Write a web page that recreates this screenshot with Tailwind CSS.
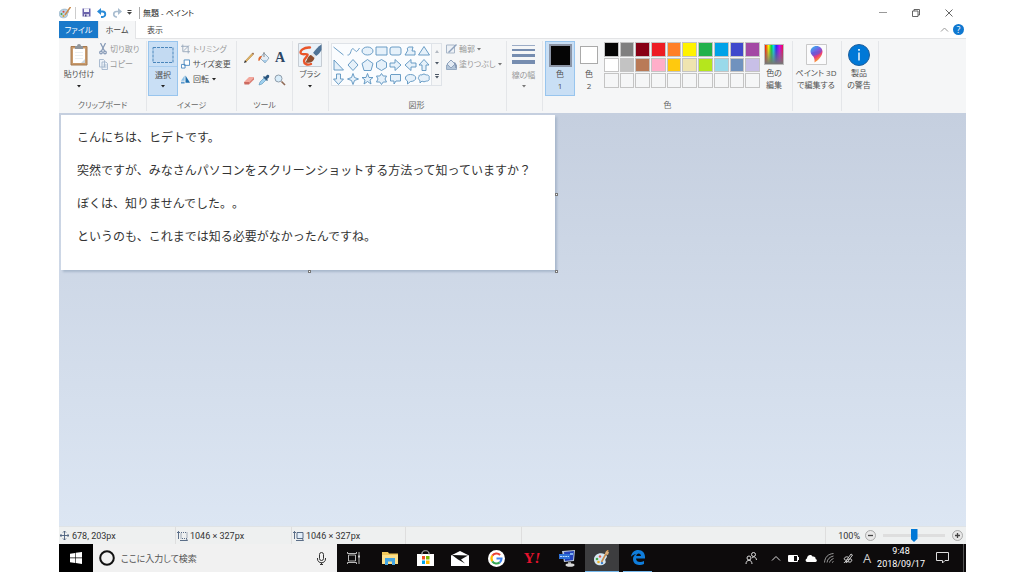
<!DOCTYPE html>
<html lang="ja">
<head>
<meta charset="utf-8">
<meta name="viewport" content="width=device-width, initial-scale=1">
<title>無題 - ペイント</title>
<script src="https://cdn.jsdelivr.net/npm/@tailwindcss/browser@4"></script>
</head>
<body class="bg-white">
<div class="flex h-screen flex-col overflow-hidden pr-[58px] pb-1 pl-[59px] font-['Open_Sans','Noto_Sans_CJK_JP',sans-serif] text-[9px] leading-3 text-[#444] [font-feature-settings:'palt']">

  <!-- Title bar -->
  <header class="flex h-[21px] shrink-0 items-center pt-1">
    <svg class="h-3 w-3" viewBox="0 0 12 12"><path d="M0 7C0 3.500 4 1 8 2.500 10 4 10 5 9 6c-1 1 0 2-1 3.500C5.500 12 0 11 0 7z" fill="#b9d3e6" stroke="#7f9cb3" stroke-width=".5"/><circle cx="2.500" cy="7" r="1" fill="#4aa54a"/><circle cx="4.500" cy="9" r="1" fill="#e0a020"/><circle cx="4.500" cy="4.800" r="1" fill="#d9493c"/><path d="M11.500 0 6 8" stroke="#c98a4a" stroke-width="1.500"/></svg>
    <span class="ml-1 h-3 w-px bg-[#ccc]"></span>
    <button class="ml-[6px] block" aria-label="保存"><svg class="h-[9px] w-[9px]" viewBox="0 0 9 9"><path d="M.5.5h8v8h-8z" fill="#6a62ab"/><path d="M2 .5h5V4H2z" fill="#f4f4fb"/><path d="M2 6h5v2.500H2z" fill="#d4d2e8"/><path d="M3 6.500h1.500v2H3z" fill="#4a4484"/></svg></button>
    <button class="ml-[6px] block" aria-label="元に戻す"><svg class="h-[10px] w-[10px]" viewBox="0 0 10 10" fill="none"><path d="M2 3.500h3.500a2.500 2.500 0 0 1 0 5.500H4" stroke="#2a8bd8" stroke-width="1.900"/><path d="M4 0v7L0 3.500z" fill="#2a8bd8"/></svg></button>
    <button class="ml-[5px] block" aria-label="やり直し"><svg class="h-[10px] w-[10px]" viewBox="0 0 10 10" fill="none"><path d="M7 3.500H4.500A2.500 2.500 0 0 0 4.500 9H5" stroke="#a9bdd0" stroke-width="1.700"/><path d="M6 0v7l4-3.500z" fill="#a9bdd0"/></svg></button>
    <button class="ml-[5px] block" aria-label="クイック アクセスのカスタマイズ"><svg class="h-[5px] w-[5px]" viewBox="0 0 5 5"><path d="M.5 0h4v1h-4zM0 2h5L2.500 4.800z" fill="#444"/></svg></button>
    <span class="ml-[7px] h-3 w-px bg-[#aaa]"></span>
    <h1 class="ml-[3px] text-[8px] text-[#222]">無題 - ペイント</h1>
    <div class="ml-auto flex items-center gap-[25px] pr-[13px]">
      <button aria-label="最小化"><svg class="h-2 w-2" viewBox="0 0 8 8"><path d="M0 3.500h8" stroke="#999"/></svg></button>
      <button aria-label="元に戻す (縮小)"><svg class="h-2 w-2" viewBox="0 0 8 8" fill="none" stroke="#555" stroke-width=".9"><path d="M.5 2h5.500v5.500H.5zM2 2V.5h5.500V6H6"/></svg></button>
      <button aria-label="閉じる"><svg class="h-2 w-2" viewBox="0 0 8 8" stroke="#555" stroke-width=".9"><path d="m.5.5 7 7m0-7-7 7"/></svg></button>
    </div>
  </header>

  <!-- Tabs -->
  <nav class="flex h-[17px] shrink-0 items-stretch">
    <button class="w-[39px] bg-[#1979ca] text-[8px] text-white">ファイル</button>
    <button class="z-10 -mb-px w-[38px] border-x border-[#e3e4e6] bg-[#f5f6f7] text-[8px] text-[#444]">ホーム</button>
    <button class="w-[38px] text-[8px] text-[#444]">表示</button>
    <div class="ml-auto flex items-center gap-1 pr-[2px]">
      <button class="block" aria-label="リボンの最小化"><svg class="h-2 w-[9px]" viewBox="0 0 9 8" fill="none"><path d="m1 5.500 3.500-3.500L8 5.500" stroke="#999"/></svg></button>
      <button class="size-[11px] rounded-full bg-[#0f78d0] text-[9px] leading-[11px] text-white" aria-label="ヘルプ">?</button>
    </div>
  </nav>

  <!-- Ribbon -->
  <div class="flex h-[75px] shrink-0 border-t border-[#e3e4e6] bg-[#f5f6f7] py-[2px] text-[8px] text-[#505050]">
    <section class="flex w-[88px] shrink-0 flex-col border-r border-[#e4e6e9]">
      <div class="flex grow">
        <button class="ml-[3px] flex w-[34px] flex-col items-center pt-[3px]">
          <svg class="h-[22px] w-[18px]" viewBox="0 0 18 22"><path d="M1 2.500h16v18.500H1z" fill="#c99a6b" stroke="#a67a50"/><path d="M3 4.500h12v14.500H3z" fill="#fff"/><path d="M11 19h4v-4z" fill="#c9d5df"/><path d="M5 2h2a2 2 0 0 1 4 0h2v3H5z" fill="#8e959c"/><path d="M5 8.500h8M5 11.500h8M5 14.500h8" stroke="#e0e6ec" stroke-width=".7"/></svg>
          <span class="mt-[2px] whitespace-nowrap">貼り付け</span>
          <svg class="mt-[5px] h-[3px] w-[4px]" viewBox="0 0 4 3"><path d="M0 0h4L2 2.600z" fill="#222"/></svg>
        </button>
        <div class="ml-[3px] flex flex-col gap-[3px] pt-[2px] text-[#999]">
          <button class="flex items-center gap-[3px] whitespace-nowrap"><svg class="h-3 w-2" viewBox="0 0 8 12" fill="none" stroke="#8498b5" stroke-width="1.200"><path d="M1.500 0 5.500 8M6.500 0l-4 8"/><circle cx="2" cy="9.500" r="1.300"/><circle cx="6" cy="9.500" r="1.300"/></svg>切り取り</button>
          <button class="flex items-center gap-[2px] whitespace-nowrap"><svg class="h-[11px] w-[9px]" viewBox="0 0 9 11" fill="#edf2f8" stroke="#a3b6cc" stroke-width=".9"><path d="M.5.5h4l1 1V8h-5zM3 3h4l1.500 1.500v6H3z"/><path d="M4.500 6h3M4.500 8h3"/></svg>コピー</button>
        </div>
      </div>
      <h2 class="text-center text-[#666]">クリップボード</h2>
    </section>

    <section class="flex w-[90px] shrink-0 flex-col border-r border-[#e4e6e9]">
      <div class="flex grow">
        <button class="ml-px flex h-[55px] w-[30px] flex-col items-center border border-[#98c5ee] bg-[#c9dff5]">
          <svg class="mt-1 h-[18px] w-[22px]" viewBox="0 0 22 18"><path d="M1 1.500h20v15H1z" fill="#c3daf2" stroke="#4b86bb" stroke-dasharray="3 1"/></svg>
          <span class="mt-[2px] w-full border-t border-[#a9cdef] pt-[2px]">選択</span>
          <svg class="mt-1 h-[3px] w-[4px]" viewBox="0 0 4 3"><path d="M0 0h4L2 2.600z" fill="#222"/></svg>
        </button>
        <div class="ml-[3px] flex flex-col gap-[3px] pt-[2px]">
          <button class="flex items-center gap-[3px] whitespace-nowrap text-[#999]"><svg class="h-[10px] w-[9px]" viewBox="0 0 10 10" fill="none" stroke="#98a8bb"><path d="M2 0v8h8M0 2h8v8M3 7l6-6"/></svg>トリミング</button>
          <button class="flex items-center gap-[3px] whitespace-nowrap"><svg class="h-[10px] w-[9px]" viewBox="0 0 10 10" fill="#fff" stroke="#4787c0"><path d="M3.500.5h6v6h-6zM.5 5.500h4v4h-4z"/></svg>サイズ変更</button>
          <button class="flex items-center gap-[3px] whitespace-nowrap"><svg class="h-[9px] w-[9px]" viewBox="0 0 10 9"><path d="M4 0v6H0z" fill="#8fc3e8"/><path d="m5 0 5 8H5z" fill="#1e6fae"/><path d="M0 7h4v2H0z" fill="#5b9bd0"/></svg>回転<svg class="h-[3px] w-[4px]" viewBox="0 0 4 3"><path d="M0 0h4L2 2.600z" fill="#222"/></svg></button>
        </div>
      </div>
      <h2 class="text-center text-[#666]">イメージ</h2>
    </section>

    <section class="flex w-[56px] shrink-0 flex-col border-r border-[#e4e6e9]">
      <div class="grid grow grid-cols-3 place-items-center px-1 pt-[6px] pb-[8px]">
        <button aria-label="鉛筆"><svg class="size-3" viewBox="0 0 12 12"><path d="m1 11 1-3 2 2z" fill="#333"/><path d="M2.500 8.500 9 1.500l1.200 1.200-6.700 6.800z" fill="#e3b562" stroke="#a57b3b" stroke-width=".5"/><path d="m9 1.500 1.200 1.200.8-.9L10 .6z" fill="#8c5a3a"/></svg></button>
        <button aria-label="塗りつぶし"><svg class="size-3" viewBox="0 0 12 12"><path d="m6 1 5 5-4 5-5-5z" fill="#e4edf5" stroke="#7f98ad" stroke-width=".8"/><path d="M6 5V0" stroke="#888"/><path d="M4 4C1 4 0 6 .5 9 2 9 2 7 3 6z" fill="#e0672f"/><path d="M4.500 8h4.800L7 11z" fill="#a5cbe8"/></svg></button>
        <button class="font-['Liberation_Serif',serif] text-[14px] leading-3 font-bold text-[#2c4664]" aria-label="テキスト">A</button>
        <button aria-label="消しゴム"><svg class="size-3" viewBox="0 0 12 12"><path d="m1 8 5-5h5L6 8z" fill="#f3a79c"/><path d="M1 8h5v2.500H1.500z" fill="#cc6a60"/><path d="m6 8 5-5v2.500L6 10.500z" fill="#dd8278"/></svg></button>
        <button aria-label="色の選択"><svg class="size-3" viewBox="0 0 12 12"><path d="m1 11 1-3 4-4 2 2-4 4z" fill="#9fd0ef" stroke="#5690b5" stroke-width=".6"/><path d="m5 3 4 4 1-1-1-1c3-1 3-5 0-4L7 3 6 2z" fill="#2b567f"/></svg></button>
        <button aria-label="拡大鏡"><svg class="size-3" viewBox="0 0 12 12"><circle cx="4.500" cy="4.500" r="3.500" fill="#d9edfa" stroke="#8f9dab"/><path d="m7.500 7.500 3.500 3.500" stroke="#8f6a55" stroke-width="1.600"/></svg></button>
      </div>
      <h2 class="text-center text-[#666]">ツール</h2>
    </section>

    <section class="flex w-[36px] shrink-0 flex-col border-r border-[#e4e6e9]">
      <button class="flex flex-col items-center pr-px pt-[2px]">
        <svg class="h-6 w-6" viewBox="0 0 24 24"><path d="M.5.5h23v23H.5z" fill="#eaf2f9" stroke="#c6ccd3"/><path d="M12 4.500C6 4 1 8 3 10.500c1.500 1.500 5.500 0 6.500 1 1 1.500-3.500 3.500-3.500 6.500s3 4.500 7 3" fill="none" stroke="#e9552a" stroke-width="2.400" stroke-linecap="round"/><path d="M23.500 1.500c-3.500 2-6.500 5.500-8.500 8.500l3 3c2.500-1.500 4.500-4 5.500-6z" fill="#4f7396"/><path d="m15 10 3 3-1.500 2-3.500-3z" fill="#e2e5e8"/><path d="M13 12c-3 .5-3.500 4-5.500 7.500 5 1 8-.5 9-4.500z" fill="#8e4d2d"/></svg>
        <span class="mt-px">ブラシ</span>
        <svg class="mt-[5px] h-[3px] w-[4px]" viewBox="0 0 4 3"><path d="M0 0h4L2 2.600z" fill="#222"/></svg>
      </button>
    </section>

    <section class="flex w-[178px] shrink-0 flex-col border-r border-[#e4e6e9]">
      <div class="flex grow items-start">
        <div class="mt-[2px] ml-[2px] flex h-[43px] border border-[#dfe3e8] bg-[#fafcfe]">
          <svg class="h-[42px] w-[99px]" viewBox="0 0 99 42" fill="#e6f1fa" stroke="#5b93c0" stroke-width=".9" role="img" aria-label="図形の一覧">
            <path d="m1.500 3 10 8" fill="none"/>
            <path d="M15.500 11c4 1 3-8 6-6s2 5 6-1" fill="none"/>
            <ellipse cx="35.500" cy="7" rx="5.500" ry="4"/>
            <path d="M44 3h11v8H44z"/>
            <rect x="58" y="3" width="11" height="8" rx="2"/>
            <path d="m73 11 3-5-1-1 1.500-2H81l-1 4h3v4z"/>
            <path d="m92 2.500 5.500 8.500h-11z"/>
            <path d="M2 16v10h9.500z"/>
            <path d="m21 15.500 5 5.500-5 5.500-5-5.500z"/>
            <path d="m35.500 15.500 5.500 4-2 7h-7l-2-7z"/>
            <path d="m49.500 15.500 5 3v5l-5 3-5-3v-5z"/>
            <path d="M58 19h5v-3.500l6 5.500-6 5.500V23h-5z"/>
            <path d="M84 19h-5v-3.500L73 21l6 5.500V23h5z"/>
            <path d="M90 26.500V21h-3l5-5.500 5 5.500h-3v5.500z"/>
            <path d="M4.500 30v5h-3l5 5.500 5-5.500h-3v-5z"/>
            <path d="m21 29.500 1.500 4 4 1.500-4 1.500-1.500 4-1.500-4-4-1.500 4-1.500z"/>
            <path d="m35.500 29.500 1.500 4h4l-3 2.500 1 4-3.500-2.500L32 40l1-4-3-2.500h4z"/>
            <path d="m49.500 29.500 1.700 2.500h3.300L53 35l1.500 3h-3.300l-1.700 2.500-1.700-2.500h-3.300l1.500-3-1.500-3h3.300z"/>
            <path d="M59 30.500h9.500v6.500H64l-2 3v-3h-3.500v-6z"/>
            <path d="M78.500 30.500c7 0 7 7 0 7l-3 2.500v-3c-4-2-2-6.500 3-6.500z"/>
            <path d="M90 31c1-1.500 3-1 4 0 2-.5 4 1 3 3 1 2-1 3.500-3 3-1 1-3 1-4 0l-2 2v-2.500c-2-1-2-3-1-4 0-1.500 1-2 3-1.500z"/>
          </svg>
          <div class="flex w-[10px] flex-col items-center justify-between border-l border-[#dfe3e8] bg-[#f5f6f7] py-[6px]">
            <svg class="h-[3px] w-[4px]" viewBox="0 0 4 3"><path d="M0 3h4L2 0z" fill="#b3bac2"/></svg>
            <svg class="h-[3px] w-[4px]" viewBox="0 0 4 3"><path d="M0 0h4L2 2.600z" fill="#4c5866"/></svg>
            <svg class="h-[5px] w-[4px]" viewBox="0 0 4 5"><path d="M0 0h4v1H0zM0 2h4L2 4.600z" fill="#4c5866"/></svg>
          </div>
        </div>
        <div class="ml-1 flex flex-col gap-[3px] pt-[2px] text-[#999]">
          <button class="flex items-center gap-[2px] whitespace-nowrap"><svg class="h-[10px] w-[11px]" viewBox="0 0 11 10"><path d="M.5 1h8v8h-8z" fill="#edf1f6" stroke="#a9b7c8"/><path d="m2 8 8-8 1 1-8 8z" fill="#8fa2bc"/></svg>輪郭<svg class="h-[3px] w-[4px]" viewBox="0 0 4 3"><path d="M0 0h4L2 2.600z" fill="#777"/></svg></button>
          <button class="flex items-center gap-[2px] whitespace-nowrap"><svg class="h-[11px] w-[11px]" viewBox="0 0 11 11"><path d="M.5 6h10v4.500H.5z" fill="#b2c4d8" stroke="#97abc2"/><path d="m5 1 4 4-4 4-4-4z" fill="#e2eaf3" stroke="#8fa2bc"/><path d="M8 4c2 0 2 3 2 5" fill="none" stroke="#8295b2" stroke-width="1.500"/></svg>塗りつぶし<svg class="h-[3px] w-[4px]" viewBox="0 0 4 3"><path d="M0 0h4L2 2.600z" fill="#777"/></svg></button>
        </div>
      </div>
      <h2 class="pr-[2px] text-center text-[#666]">図形</h2>
    </section>

    <section class="flex w-[36px] shrink-0 flex-col border-r border-[#e4e6e9]">
      <button class="flex flex-col items-center pt-1 pr-[2px] text-[#999]">
        <svg class="h-5 w-[23px]" viewBox="0 0 23 20" fill="#768db0"><path d="M0 0h23v1H0z" opacity=".7"/><path d="M0 4h23v2H0zM0 9h23v3H0zM0 15h23v4H0z"/></svg>
        <span class="mt-1">線の幅</span>
        <svg class="mt-1 h-[3px] w-[4px]" viewBox="0 0 4 3"><path d="M0 0h4L2 2.600z" fill="#777"/></svg>
      </button>
    </section>

    <section class="flex w-[250px] shrink-0 flex-col border-r border-[#e4e6e9]">
      <div class="flex grow items-start">
        <button class="ml-[2px] flex h-[55px] w-[30px] flex-col items-center border border-[#98c5ee] bg-[#c9dff5] pt-[2px]">
          <span class="size-[23px] border-2 border-[#8b94a5] bg-[#050505]"></span>
          <span class="mt-px">色</span><span>1</span>
        </button>
        <button class="flex h-[55px] w-[28px] flex-col items-center pt-[5px]">
          <span class="size-[18px] border border-[#aaa] bg-white"></span>
          <span class="mt-1">色</span><span>2</span>
        </button>
        <div class="mt-px ml-px grid h-[46px] w-[156px] grid-cols-10 grid-rows-3 gap-px">
          <button aria-label="黒" class="border border-[#c4c4c4] bg-[#050505]"></button>
          <button aria-label="灰色" class="border border-[#c4c4c4] bg-[#7f7f7f]"></button>
          <button aria-label="濃い赤" class="border border-[#c4c4c4] bg-[#880015]"></button>
          <button aria-label="赤" class="border border-[#c4c4c4] bg-[#ed1c24]"></button>
          <button aria-label="オレンジ" class="border border-[#c4c4c4] bg-[#ff7f27]"></button>
          <button aria-label="黄" class="border border-[#c4c4c4] bg-[#fff200]"></button>
          <button aria-label="緑" class="border border-[#c4c4c4] bg-[#22b14c]"></button>
          <button aria-label="青緑" class="border border-[#c4c4c4] bg-[#00a2e8]"></button>
          <button aria-label="藍" class="border border-[#c4c4c4] bg-[#3f48cc]"></button>
          <button aria-label="紫" class="border border-[#c4c4c4] bg-[#a349a4]"></button>
          <button aria-label="白" class="border border-[#c4c4c4] bg-white"></button>
          <button aria-label="薄い灰色" class="border border-[#c4c4c4] bg-[#c3c3c3]"></button>
          <button aria-label="茶" class="border border-[#c4c4c4] bg-[#b97a57]"></button>
          <button aria-label="ローズ" class="border border-[#c4c4c4] bg-[#ffaec9]"></button>
          <button aria-label="ゴールド" class="border border-[#c4c4c4] bg-[#ffc90e]"></button>
          <button aria-label="薄い黄" class="border border-[#c4c4c4] bg-[#efe4b0]"></button>
          <button aria-label="ライム" class="border border-[#c4c4c4] bg-[#b5e61d]"></button>
          <button aria-label="薄い青緑" class="border border-[#c4c4c4] bg-[#99d9ea]"></button>
          <button aria-label="青灰色" class="border border-[#c4c4c4] bg-[#7092be]"></button>
          <button aria-label="ラベンダー" class="border border-[#c4c4c4] bg-[#c8bfe7]"></button>
          <button aria-label="ユーザー色 1" class="border border-[#c4c4c4]"></button>
          <button aria-label="ユーザー色 2" class="border border-[#c4c4c4]"></button>
          <button aria-label="ユーザー色 3" class="border border-[#c4c4c4]"></button>
          <button aria-label="ユーザー色 4" class="border border-[#c4c4c4]"></button>
          <button aria-label="ユーザー色 5" class="border border-[#c4c4c4]"></button>
          <button aria-label="ユーザー色 6" class="border border-[#c4c4c4]"></button>
          <button aria-label="ユーザー色 7" class="border border-[#c4c4c4]"></button>
          <button aria-label="ユーザー色 8" class="border border-[#c4c4c4]"></button>
          <button aria-label="ユーザー色 9" class="border border-[#c4c4c4]"></button>
          <button aria-label="ユーザー色 10" class="border border-[#c4c4c4]"></button>
        </div>
        <button class="flex w-[28px] flex-col items-center pt-[3px]">
          <span class="h-[21px] w-[20px] border border-[#bbb] bg-[linear-gradient(to_bottom,transparent,#777),linear-gradient(to_right,#f00,#ff0_20%,#0d3_35%,#0df_48%,#22f_62%,#c0f_80%,#f04)]"></span>
          <span class="mt-[2px]">色の<br>編集</span>
        </button>
      </div>
      <h2 class="text-center text-[#666]">色</h2>
    </section>

    <section class="flex w-[49px] shrink-0 flex-col border-r border-[#e4e6e9]">
      <button class="flex flex-col items-center pt-[3px] pr-[2px]">
        <svg class="h-[21px] w-[21px]" viewBox="0 0 21 21"><defs><linearGradient id="pin" x1="0" y1="0" x2=".5" y2="1"><stop offset="0" stop-color="#24c4f4"/><stop offset=".45" stop-color="#7a5be0"/><stop offset=".7" stop-color="#e93a7c"/><stop offset="1" stop-color="#ffb020"/></linearGradient></defs><path d="M.5.5h20v20H.5z" fill="#fbfbfc" stroke="#c9c9c9"/><path d="M10.500 2C7 2 4.500 4.500 4.500 7.500c0 4 5 4 4 11 4-2 8-7 8-11C16.500 4.500 14 2 10.500 2z" fill="url(#pin)"/><path d="M5 9c3-2 8-1 11-3-1 4-5 5-9 6z" fill="#5f57d6" opacity=".6"/></svg>
        <span class="mt-[2px] whitespace-nowrap">ペイント 3D<br>で編集する</span>
      </button>
    </section>

    <section class="flex w-[37px] shrink-0 flex-col border-r border-[#e4e6e9]">
      <button class="flex flex-col items-center pr-[2px] pt-[3px]">
        <svg class="h-[22px] w-[22px]" viewBox="0 0 22 22"><circle cx="11" cy="11" r="10.500" fill="#0078d7" stroke="#1f5f9c"/><path d="M10.300 8.500h1.400v8h-1.400zM10.200 5h1.600v1.800h-1.600z" fill="#fff"/></svg>
        <span class="mt-px whitespace-nowrap">製品<br>の警告</span>
      </button>
    </section>
  </div>

  <!-- Canvas area -->
  <main class="min-h-0 grow bg-linear-to-b from-[#c5cfdf] to-[#dce6f3] pt-[2px] pl-[2px]">
    <div class="relative w-fit bg-white pt-[5px] pr-6 pb-[18px] pl-4 font-['Noto_Sans_CJK_JP',sans-serif] text-[12px] leading-[33px] whitespace-nowrap text-[#333] shadow-[2px_2px_2px_#a9b8cc] [font-feature-settings:normal] [text-spacing-trim:space-all]">
      <p>こんにちは、ヒデトです。</p>
      <p>突然ですが、みなさんパソコンをスクリーンショットする方法って知っていますか？</p>
      <p>ぼくは、知りませんでした。。</p>
      <p>というのも、これまでは知る必要がなかったんですね。</p>
      <span class="absolute top-1/2 -right-[3px] size-[3px] border border-[#777] bg-white"></span>
      <span class="absolute -bottom-[3px] left-1/2 size-[3px] border border-[#777] bg-white"></span>
      <span class="absolute -right-[3px] -bottom-[3px] size-[3px] border border-[#777] bg-white"></span>
    </div>
  </main>

  <!-- Status bar -->
  <footer class="flex h-[18px] shrink-0 items-stretch border-t border-[#dfe3e6] bg-[#eef0f0] font-['Roboto','Noto_Sans_CJK_JP',sans-serif] text-[9px] text-[#333]">
    <div class="flex w-[117px] items-center gap-[3px] border-r border-[#dedede] pl-px"><svg class="size-[9px]" viewBox="0 0 9 9" fill="none" stroke="#4a5f7c" stroke-width=".9"><path d="M4.500 0v9M0 4.500h9M3 1.500 4.500 0 6 1.500M3 7.500 4.500 9 6 7.500M1.500 3 0 4.500 1.500 6M7.500 3 9 4.500 7.500 6"/></svg>678, 203px</div>
    <div class="flex w-[116px] items-center gap-[2px] border-r border-[#dedede] pl-px"><svg class="h-[10px] w-[11px]" viewBox="0 0 11 10" fill="none" stroke="#4a5f7c" stroke-width=".9"><path d="M1.500 8V.5M0 2 1.500.5 3 2M3 9.500h7.500M9.500 8l1 1.500"/><path d="M4 1.500h6v6H4z" stroke-dasharray="1 1"/></svg>1046 × 327px</div>
    <div class="flex w-[114px] items-center gap-[2px] border-r border-[#dedede] pl-px"><svg class="h-[10px] w-[11px]" viewBox="0 0 11 10" fill="none" stroke="#4a5f7c" stroke-width=".9"><path d="M1.500 8V.5M0 2 1.500.5 3 2M3 9.500h7.500M9.500 8l1 1.500"/><path d="M4 1.500h6v6H4z" fill="#e3effa"/></svg>1046 × 327px</div>
    <div class="w-[116px] border-r border-[#dedede]"></div>
    <div class="ml-auto flex items-center border-l border-[#dedede] pr-[3px] pl-3">
      <label for="zoom">100%</label>
      <button class="ml-[5px] block" aria-label="縮小"><svg class="size-[11px]" viewBox="0 0 11 11"><circle cx="5.500" cy="5.500" r="5" fill="#e8e8e8" stroke="#999" stroke-width=".8"/><path d="M3 5.500h5" stroke="#444" stroke-width="1.300"/></svg></button>
      <input id="zoom" type="range" value="50" class="mx-[7px] h-[13px] w-[62px] appearance-none bg-[linear-gradient(#dedede,#dedede)] bg-[length:100%_3px] bg-center bg-no-repeat [&::-webkit-slider-thumb]:h-[13px] [&::-webkit-slider-thumb]:w-[7px] [&::-webkit-slider-thumb]:appearance-none [&::-webkit-slider-thumb]:bg-[#0078d7] [&::-webkit-slider-thumb]:[clip-path:polygon(0_0,100%_0,100%_75%,50%_100%,0_75%)]">
      <button class="block" aria-label="拡大"><svg class="size-[11px]" viewBox="0 0 11 11"><circle cx="5.500" cy="5.500" r="5" fill="#e8e8e8" stroke="#999" stroke-width=".8"/><path d="M3 5.500h5M5.500 3v5" stroke="#444" stroke-width="1.300"/></svg></button>
    </div>
  </footer>

  <!-- Taskbar -->
  <div class="flex h-7 shrink-0 items-stretch bg-[#0d0b0c] text-white">
    <button class="flex w-[34px] items-center justify-center bg-black" aria-label="スタート"><svg class="size-3" viewBox="0 0 12 12" fill="#fff"><path d="m0 1.700 5.200-.8v4.700H0zM5.800.8 12 0v5.600H5.800zM0 6.300h5.200V11L0 10.300zM5.800 6.300H12V12l-6.200-.9z"/></svg></button>
    <div class="flex w-[244px] items-center bg-[#f1f1f1] pr-[11px] pl-[6px]">
      <svg class="size-4" viewBox="0 0 16 16"><circle cx="8" cy="8" r="6.800" fill="none" stroke="#111" stroke-width="2"/></svg>
      <input type="text" placeholder="ここに入力して検索" aria-label="検索" class="ml-[6px] h-5 w-0 grow bg-transparent text-[9px] outline-none placeholder:text-[#555]">
      <svg class="h-[13px] w-[9px]" viewBox="0 0 9 13" fill="none" stroke="#333"><rect x="2.500" y=".5" width="4" height="8" rx="2"/><path d="M.5 6v1c0 5 8 5 8 0V6M4.500 10.500v2M3 12.500h3"/></svg>
    </div>
    <div class="flex">
      <button class="flex w-[33px] items-center justify-center" aria-label="タスク ビュー"><svg class="h-3 w-[13px]" viewBox="0 0 13 12" fill="none" stroke="#ccc" stroke-width=".9"><path d="M1.500 3h7v6h-7zM.5 0v1.500h9V0M.5 12v-1.500h9V12M12 0v12"/><path d="M11 3.500h2v2h-2z" fill="#ccc" stroke="none"/></svg></button>
      <button class="ml-[3px] flex w-[34px] items-center justify-center" aria-label="エクスプローラー"><svg class="h-[13px] w-4" viewBox="0 0 16 13"><path d="M0 0h6l1 1.500h9V12H0z" fill="#f0c75a"/><path d="M0 3h16v9H0z" fill="#fbe08c"/><path d="M3 6h10v7h-3V9.500H6V13H3z" fill="#45a6e4"/></svg></button>
      <button class="ml-px flex w-[34px] items-center justify-center" aria-label="ストア"><svg class="h-4 w-[17px]" viewBox="0 0 17 16"><path d="M0 4h17v12H0z" fill="#fff"/><path d="M5 5V3c0-3 7-3 7 0v2" fill="none" stroke="#ccc"/><path d="M5 6h3v3.500H5z" fill="#f25022"/><path d="M9 6h3.500v3.500H9z" fill="#7fba00"/><path d="M5 10.500h3V14H5z" fill="#00a4ef"/><path d="M9 10.500h3.500V14H9z" fill="#ffb900"/></svg></button>
      <button class="ml-px flex w-[34px] items-center justify-center" aria-label="メール"><svg class="h-[15px] w-[18px]" viewBox="0 0 18 15"><path d="m0 4.500 9-4.500 9 4.500V15H0z" fill="#fff"/><path d="m1 4 16 .5-7 4 4 4-7-4z" fill="#111"/></svg></button>
      <button class="ml-[2px] flex w-[34px] items-center justify-center" aria-label="Google"><svg class="size-[17px]" viewBox="0 0 18 18" fill="none" stroke-width="2.200"><circle cx="9" cy="9" r="9" fill="#fff"/><path d="M4.600 6A5.300 5.300 0 0 1 12.800 5.300" stroke="#ea4335"/><path d="M4.600 6a5.300 5.300 0 0 0 0 6" stroke="#fbbc05"/><path d="M4.600 12a5.300 5.300 0 0 0 7.800 1.100" stroke="#34a853"/><path d="M12.400 13.100A5.300 5.300 0 0 0 14.300 9H9" stroke="#4285f4"/></svg></button>
      <button class="ml-[2px] flex w-[34px] items-center justify-center font-['Liberation_Serif',serif] text-[15px] font-bold text-[#e5122d]" aria-label="Yahoo! JAPAN">Y<i>!</i></button>
      <button class="ml-px flex w-[34px] items-center justify-center" aria-label="リモート デスクトップ"><svg class="size-[17px]" viewBox="0 0 17 17"><path d="m3 1 13-1-1 11-10 1z" fill="#b9c5d8"/><path d="m5 2 10-1-1 9-8 1z" fill="#2342bb"/><path d="M0 4h11v5H0z" fill="#2c6fd6"/><path d="M1 6.500h9" stroke="#b8dcff" stroke-dasharray="2 .6"/><path d="M11 3h3v2h-3z" fill="#7fb0f0"/><path d="M9 12h3v2H9z" fill="#999"/><ellipse cx="11" cy="15" rx="4.500" ry="1.800" fill="#d8d8d8"/></svg></button>
      <button class="ml-px flex w-[34px] items-center justify-center border-b border-[#76b9ed] bg-[#3d3d3f]" aria-label="ペイント"><svg class="size-4" viewBox="0 0 16 16"><path d="M0 9.500C0 5 5 2 10.500 4c3.500 1.500 2.500 3.500 1.500 4.500-2 2 1 3-1 5C7.500 17 0 15.500 0 9.500z" fill="#d5e7f2"/><circle cx="3" cy="9" r="1.300" fill="#4cae4c"/><circle cx="6" cy="6.500" r="1.200" fill="#e05a4b"/><circle cx="4.500" cy="12" r="1.300" fill="#f0b429"/><circle cx="8" cy="13" r="1.200" fill="#3b7fd0"/><path d="M14 0 7.500 12" stroke="#c58a4d" stroke-width="1.600"/><path d="m12 1 3 1-1 3-3-1z" fill="#dcae7a"/></svg></button>
      <button class="ml-1 flex w-[29px] items-center justify-center border-b border-[#76b9ed]" aria-label="Microsoft Edge"><svg class="h-[15px] w-[14px]" viewBox="0 0 14 15"><path d="M0 6.800C.5 2.500 3.500 0 7.300 0 11.500 0 14 3 14 6.800v1.700H5c0 4 5 4.300 8 2.500v3c-5 2.300-11 .7-11-5C2 6.500 3.500 5 5.300 4 3.300 4.300 1 5.200 0 6.800zm5.200-.8H10c0-3.500-4.500-3.500-4.800 0z" fill="#0f7ddb"/></svg></button>
    </div>
    <div class="ml-auto flex items-center">
      <button aria-label="People"><svg class="h-[13px] w-3" viewBox="0 0 12 13" fill="none" stroke="#ddd"><circle cx="4" cy="6" r="2"/><path d="M1 12c0-5 6-5 6 0"/><circle cx="8.500" cy="2.500" r="2"/><path d="M7 6c2-2 4-1 4.500 2"/></svg></button>
      <button class="ml-[14px]" aria-label="隠れているインジケーター"><svg class="h-[7px] w-[10px]" viewBox="0 0 10 7" fill="none" stroke="#ddd"><path d="m1 5.500 4-4 4 4"/></svg></button>
      <svg class="ml-[7px] h-[7px] w-[11px]" viewBox="0 0 11 7"><path d="M.5.500h9v6h-9z" fill="none" stroke="#fff"/><path d="M1 1h5v5H1zM10 2h1v3h-1z" fill="#fff"/></svg>
      <svg class="ml-[6px] h-2 w-3" viewBox="0 0 12 8" fill="#fff"><path d="M3 8C0 8 0 5 2 4.500 2 1 6 0 7.500 2.500 10 2 11 4 10.500 5 12.500 5.500 12 8 10.500 8z"/></svg>
      <svg class="ml-[7px] h-[10px] w-[10px]" viewBox="0 0 10 10" fill="none" stroke="#aaa" stroke-width=".9"><path d="M.5 9.500C1 4 4 1 9.500.5M3 9.500C3.500 6 5.500 4 9.500 3M5.500 9.500c.5-2 2-3 4-4M8 9.500l1.500-1"/></svg>
      <svg class="ml-[9px] h-[11px] w-[10px]" viewBox="0 0 10 11" fill="none" stroke="#ddd" stroke-width=".9"><path d="m3 8 5-7 1.500 1-5 7L3 9.500zM5 4C2 3 0 6 2 7s4-2 6-1 0 4-2 3-4-1-5 1"/></svg>
      <span class="ml-[9px] w-[10px] text-center text-[13px] leading-4 text-[#ccc]">A</span>
      <time class="ml-[5px] text-center font-['Roboto',sans-serif] text-[9px] leading-[13px]">9:48<br>2018/09/17</time>
      <button class="ml-[11px]" aria-label="通知"><svg class="h-3 w-[13px]" viewBox="0 0 13 12" fill="none" stroke="#ddd"><path d="M.5.500h12v8H9l-2.500 2.500v-2.500h-6z"/></svg></button>
      <span class="mr-[2px] ml-[14px] h-7 w-px bg-[#555]"></span>
    </div>
  </div>
</div>
</body>
</html>
